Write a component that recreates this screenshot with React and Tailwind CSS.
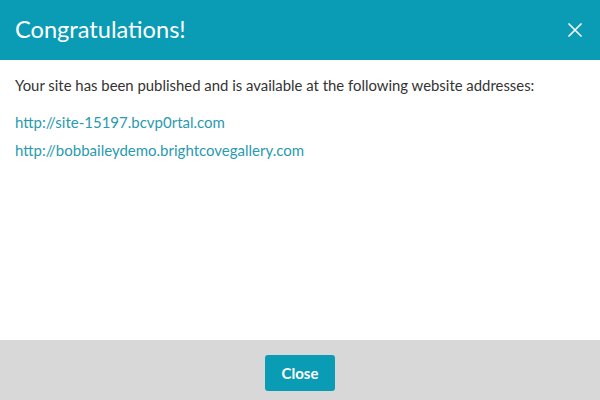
export default function App() {
  return (
    <div className="w-[600px] h-[400px] flex flex-col bg-white" style={{ fontFamily: "Lato, 'Liberation Sans', sans-serif" }}>
      <div className="h-[60px] bg-[#0a9bb5] flex items-center justify-between pl-[15px] pr-[17px]">
        <div className="text-white text-[23.6px] leading-none pb-[1px]">Congratulations!</div>
        <svg width="16" height="16" viewBox="0 0 16 16" className="text-white">
          <path d="M1.5 1.5 L14.5 14.5 M14.5 1.5 L1.5 14.5" stroke="currentColor" strokeWidth="1.6" fill="none" />
        </svg>
      </div>
      <div className="flex-1 px-[15px] pt-[15px]">
        <p className="text-[14.9px] text-[#333] leading-[20px]">Your site has been published and is available at the following website addresses:</p>
        <div className="mt-[17px] flex flex-col gap-[8px]">
          <a className="text-[15px] text-[#2a9aae] leading-[20px]">http://site-15197.bcvp0rtal.com</a>
          <a className="text-[15px] text-[#2a9aae] leading-[20px]">http://bobbaileydemo.brightcovegallery.com</a>
        </div>
      </div>
      <div className="h-[60px] bg-[#d8d8d8] flex justify-center pt-[15px]">
        <button className="w-[70px] h-[36px] rounded-[3px] bg-[#0a9bb5] text-white text-[15px] font-bold">Close</button>
      </div>
    </div>
  );
}
